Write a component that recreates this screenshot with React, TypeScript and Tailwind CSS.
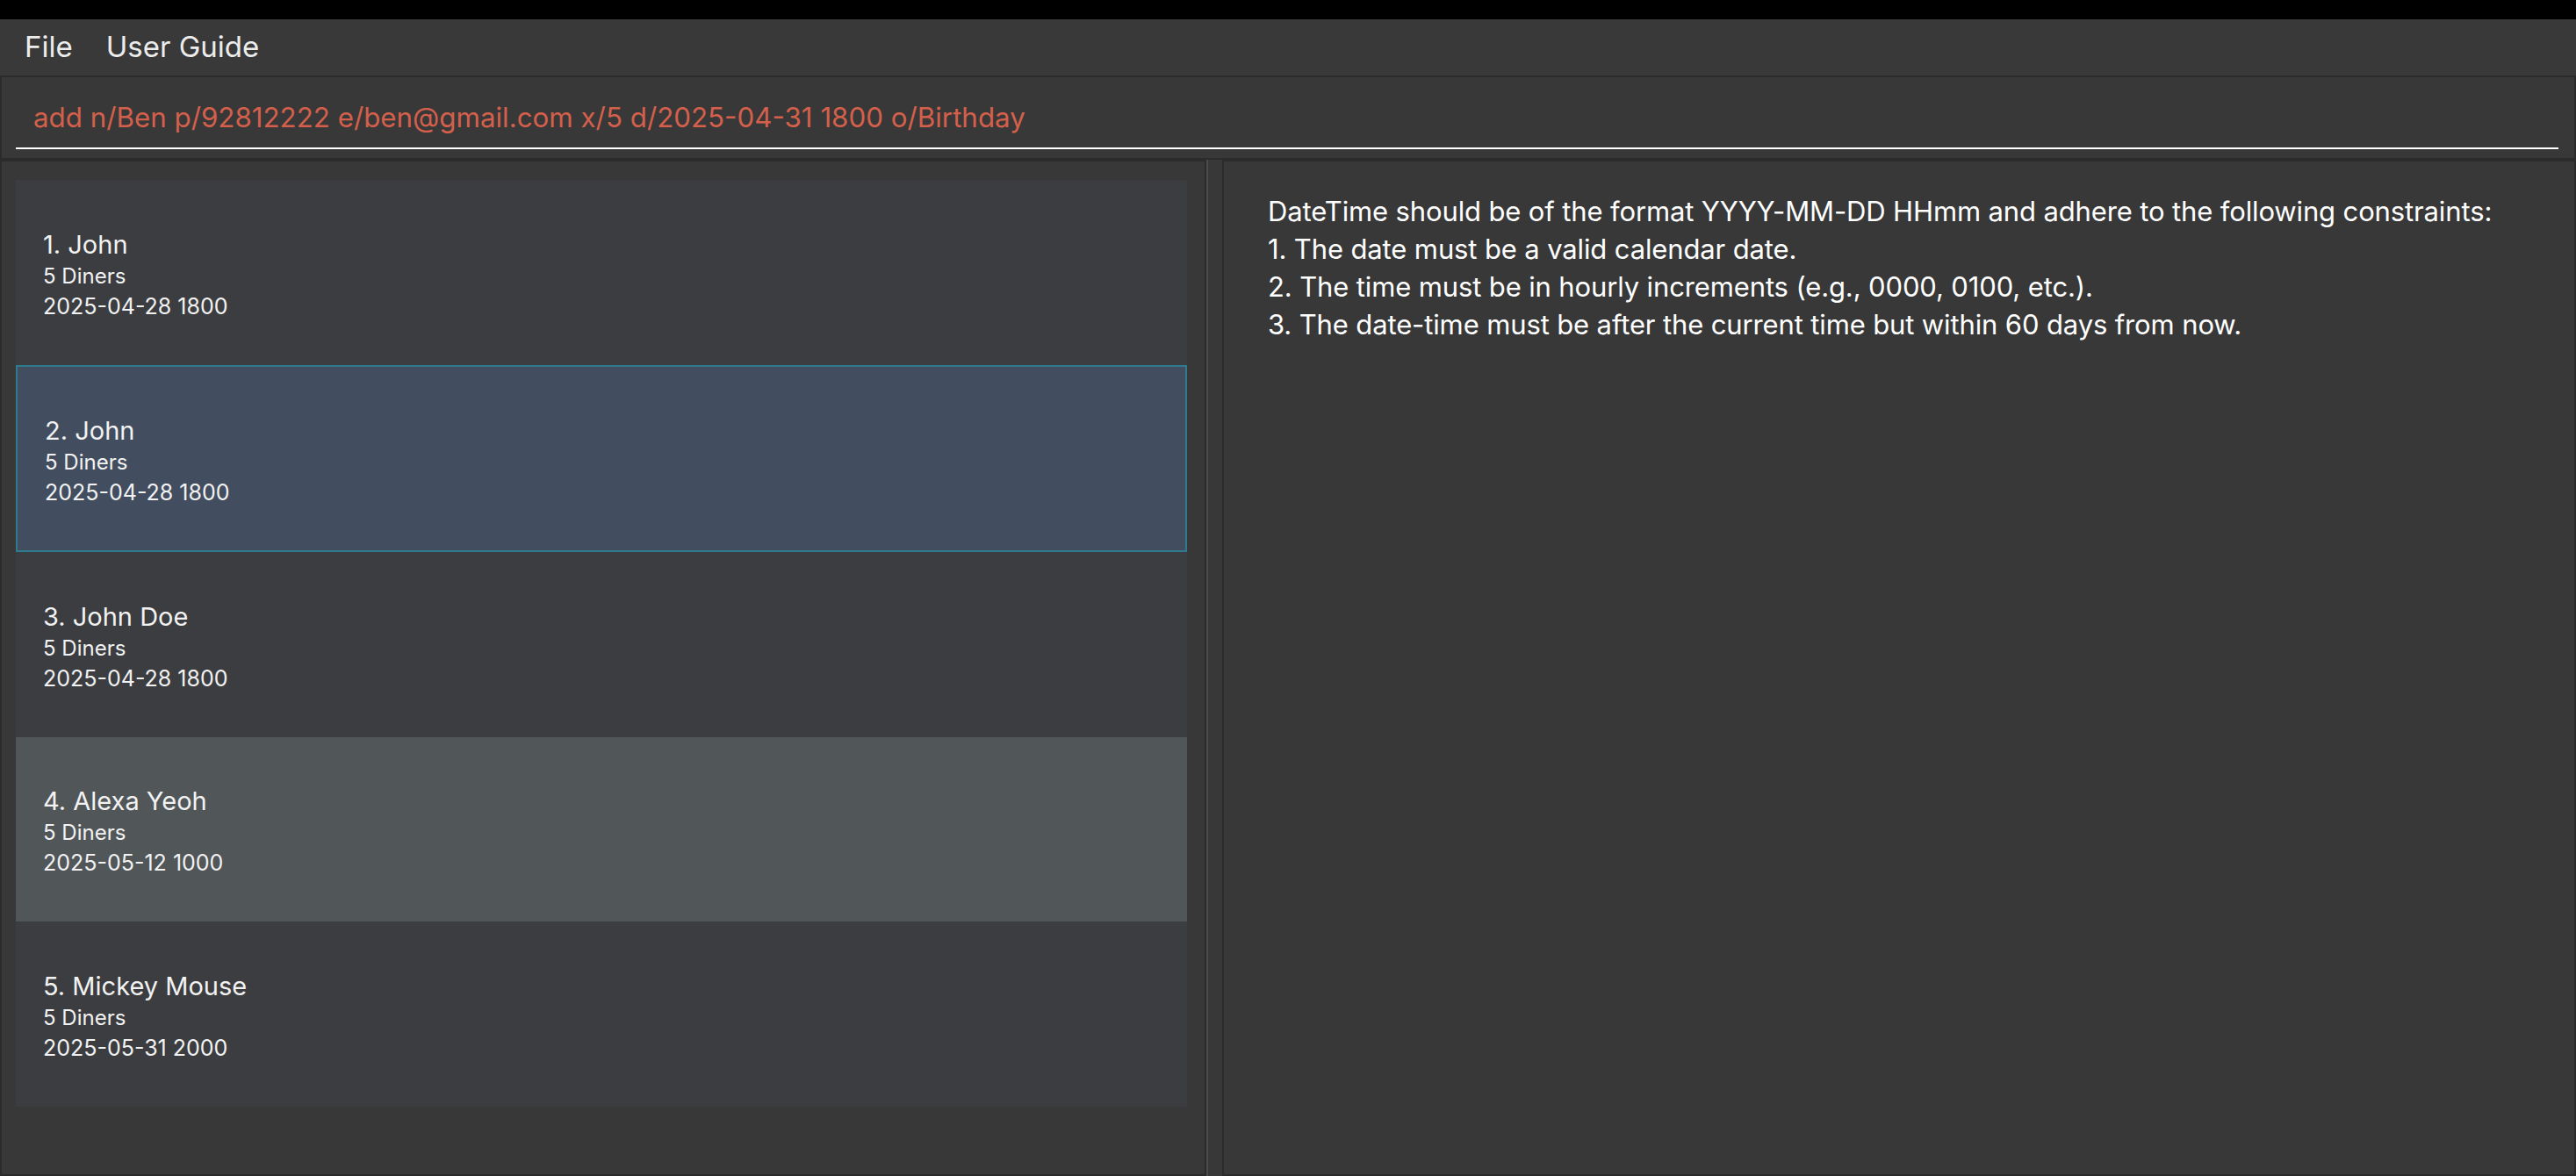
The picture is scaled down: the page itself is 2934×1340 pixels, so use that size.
const reservations = [
  { name: "1. John", diners: "5 Diners", when: "2025-04-28 1800" },
  { name: "2. John", diners: "5 Diners", when: "2025-04-28 1800", selected: true },
  { name: "3. John Doe", diners: "5 Diners", when: "2025-04-28 1800" },
  { name: "4. Alexa Yeoh", diners: "5 Diners", when: "2025-05-12 1000", hovered: true },
  { name: "5. Mickey Mouse", diners: "5 Diners", when: "2025-05-31 2000" }
];

const App = () => {
  return (
    <div className="flex h-[1340px] w-[2934px] flex-col overflow-hidden bg-[#383838] font-['Inter',sans-serif] text-[#f2f2f2]">
      <div className="h-[22px] shrink-0 bg-black" />
      <nav className="flex h-[64px] shrink-0 items-center gap-[38px] bg-[#393939] pl-[28px] text-[33px] text-[#ececec]">
        <span>File</span>
        <span>User Guide</span>
      </nav>
      <div className="h-[96px] shrink-0 border-2 border-[#2b2b2b] bg-[#383838] pl-[16px] pr-[18px] pt-[26px]">
        <div className="border-b-2 border-white pb-[14px] pl-[20px] text-[31.3px] leading-[40px] text-[#d4604c]">
          add n/Ben p/92812222 e/ben@gmail.com x/5 d/2025-04-31 1800 o/Birthday
        </div>
      </div>
      <div className="flex min-h-0 flex-1">
        <section className="w-[1374px] shrink-0 border-2 border-[#2b2b2b] bg-[#383838] pl-[16px] pr-[20px] pt-[21px]">
          <ul className="flex flex-col">
            {reservations.map((r) => (
              <li
                key={r.name}
                className={
                  r.selected
                    ? "flex h-[213px] flex-col justify-center border-2 border-[#2e7b8f] bg-[#424e5f] pl-[31px] pt-[4px]"
                    : r.hovered
                      ? "flex h-[210px] flex-col justify-center bg-[#515659] pl-[31px] pt-[4px]"
                      : "flex h-[211px] flex-col justify-center bg-[#3c3d40] pl-[31px] pt-[4px]"
                }
              >
                <span className="text-[29px] leading-[34px]">{r.name}</span>
                <span className="text-[24px] leading-[38px]">{r.diners}</span>
                <span className="text-[25px] leading-[30px]">{r.when}</span>
              </li>
            ))}
          </ul>
        </section>
        <div className="w-[18px] shrink-0 border-l-2 border-[#4b4b4b] bg-[#383838]" />
        <section className="flex-1 border-2 border-[#2b2b2b] bg-[#383838] pl-[50px] pt-[35px] text-[31px] leading-[43px] tracking-[-0.13px] text-white">
          <p>DateTime should be of the format YYYY-MM-DD HHmm and adhere to the following constraints:</p>
          <p>1. The date must be a valid calendar date.</p>
          <p>2. The time must be in hourly increments (e.g., 0000, 0100, etc.).</p>
          <p>3. The date-time must be after the current time but within 60 days from now.</p>
        </section>
      </div>
    </div>
  );
};

export default App;
